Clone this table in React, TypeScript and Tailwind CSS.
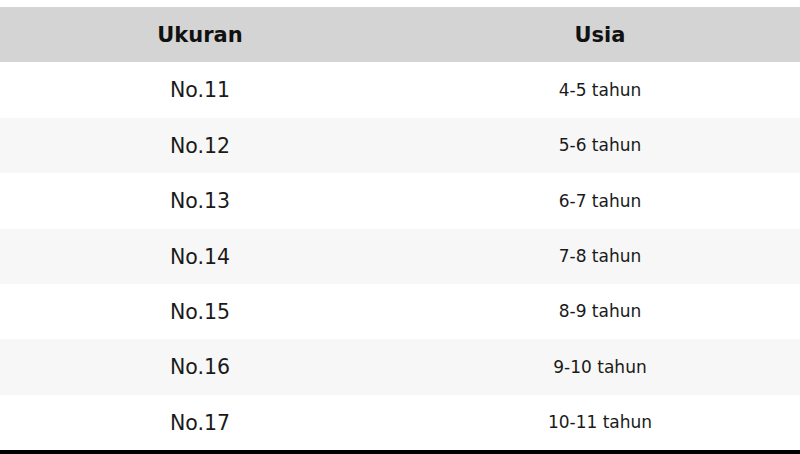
import React from "react";

const rows = [
  { size: "No.11", age: "4-5 tahun", h: "h-[56px]", bg: "bg-white" },
  { size: "No.12", age: "5-6 tahun", h: "h-[55px]", bg: "bg-[#f7f7f7]" },
  { size: "No.13", age: "6-7 tahun", h: "h-[56px]", bg: "bg-white" },
  { size: "No.14", age: "7-8 tahun", h: "h-[55px]", bg: "bg-[#f7f7f7]" },
  { size: "No.15", age: "8-9 tahun", h: "h-[55px]", bg: "bg-white" },
  { size: "No.16", age: "9-10 tahun", h: "h-[56px]", bg: "bg-[#f7f7f7]" },
  { size: "No.17", age: "10-11 tahun", h: "h-[55px]", bg: "bg-white" },
];

export default function App() {
  return (
    <div
      className="w-[800px] h-[454px] bg-white flex flex-col pt-[7px] overflow-hidden"
      style={{ fontFamily: '"DejaVu Sans", Verdana, sans-serif' }}
    >
      <div className="grid grid-cols-2 h-[55px] pt-[2px] bg-[#d4d4d4] text-[#111] font-bold text-[21px]">
        <div className="flex items-center justify-center">Ukuran</div>
        <div className="flex items-center justify-center">Usia</div>
      </div>
      {rows.map((r) => (
        <div key={r.size} className={`grid grid-cols-2 pt-[1px] ${r.h} ${r.bg} text-[#1a1a1a]`}>
          <div className="flex items-center justify-center text-[20.5px]">{r.size}</div>
          <div className="flex items-center justify-center text-[17px]">{r.age}</div>
        </div>
      ))}
      <div className="h-[4px] bg-black" />
    </div>
  );
}
